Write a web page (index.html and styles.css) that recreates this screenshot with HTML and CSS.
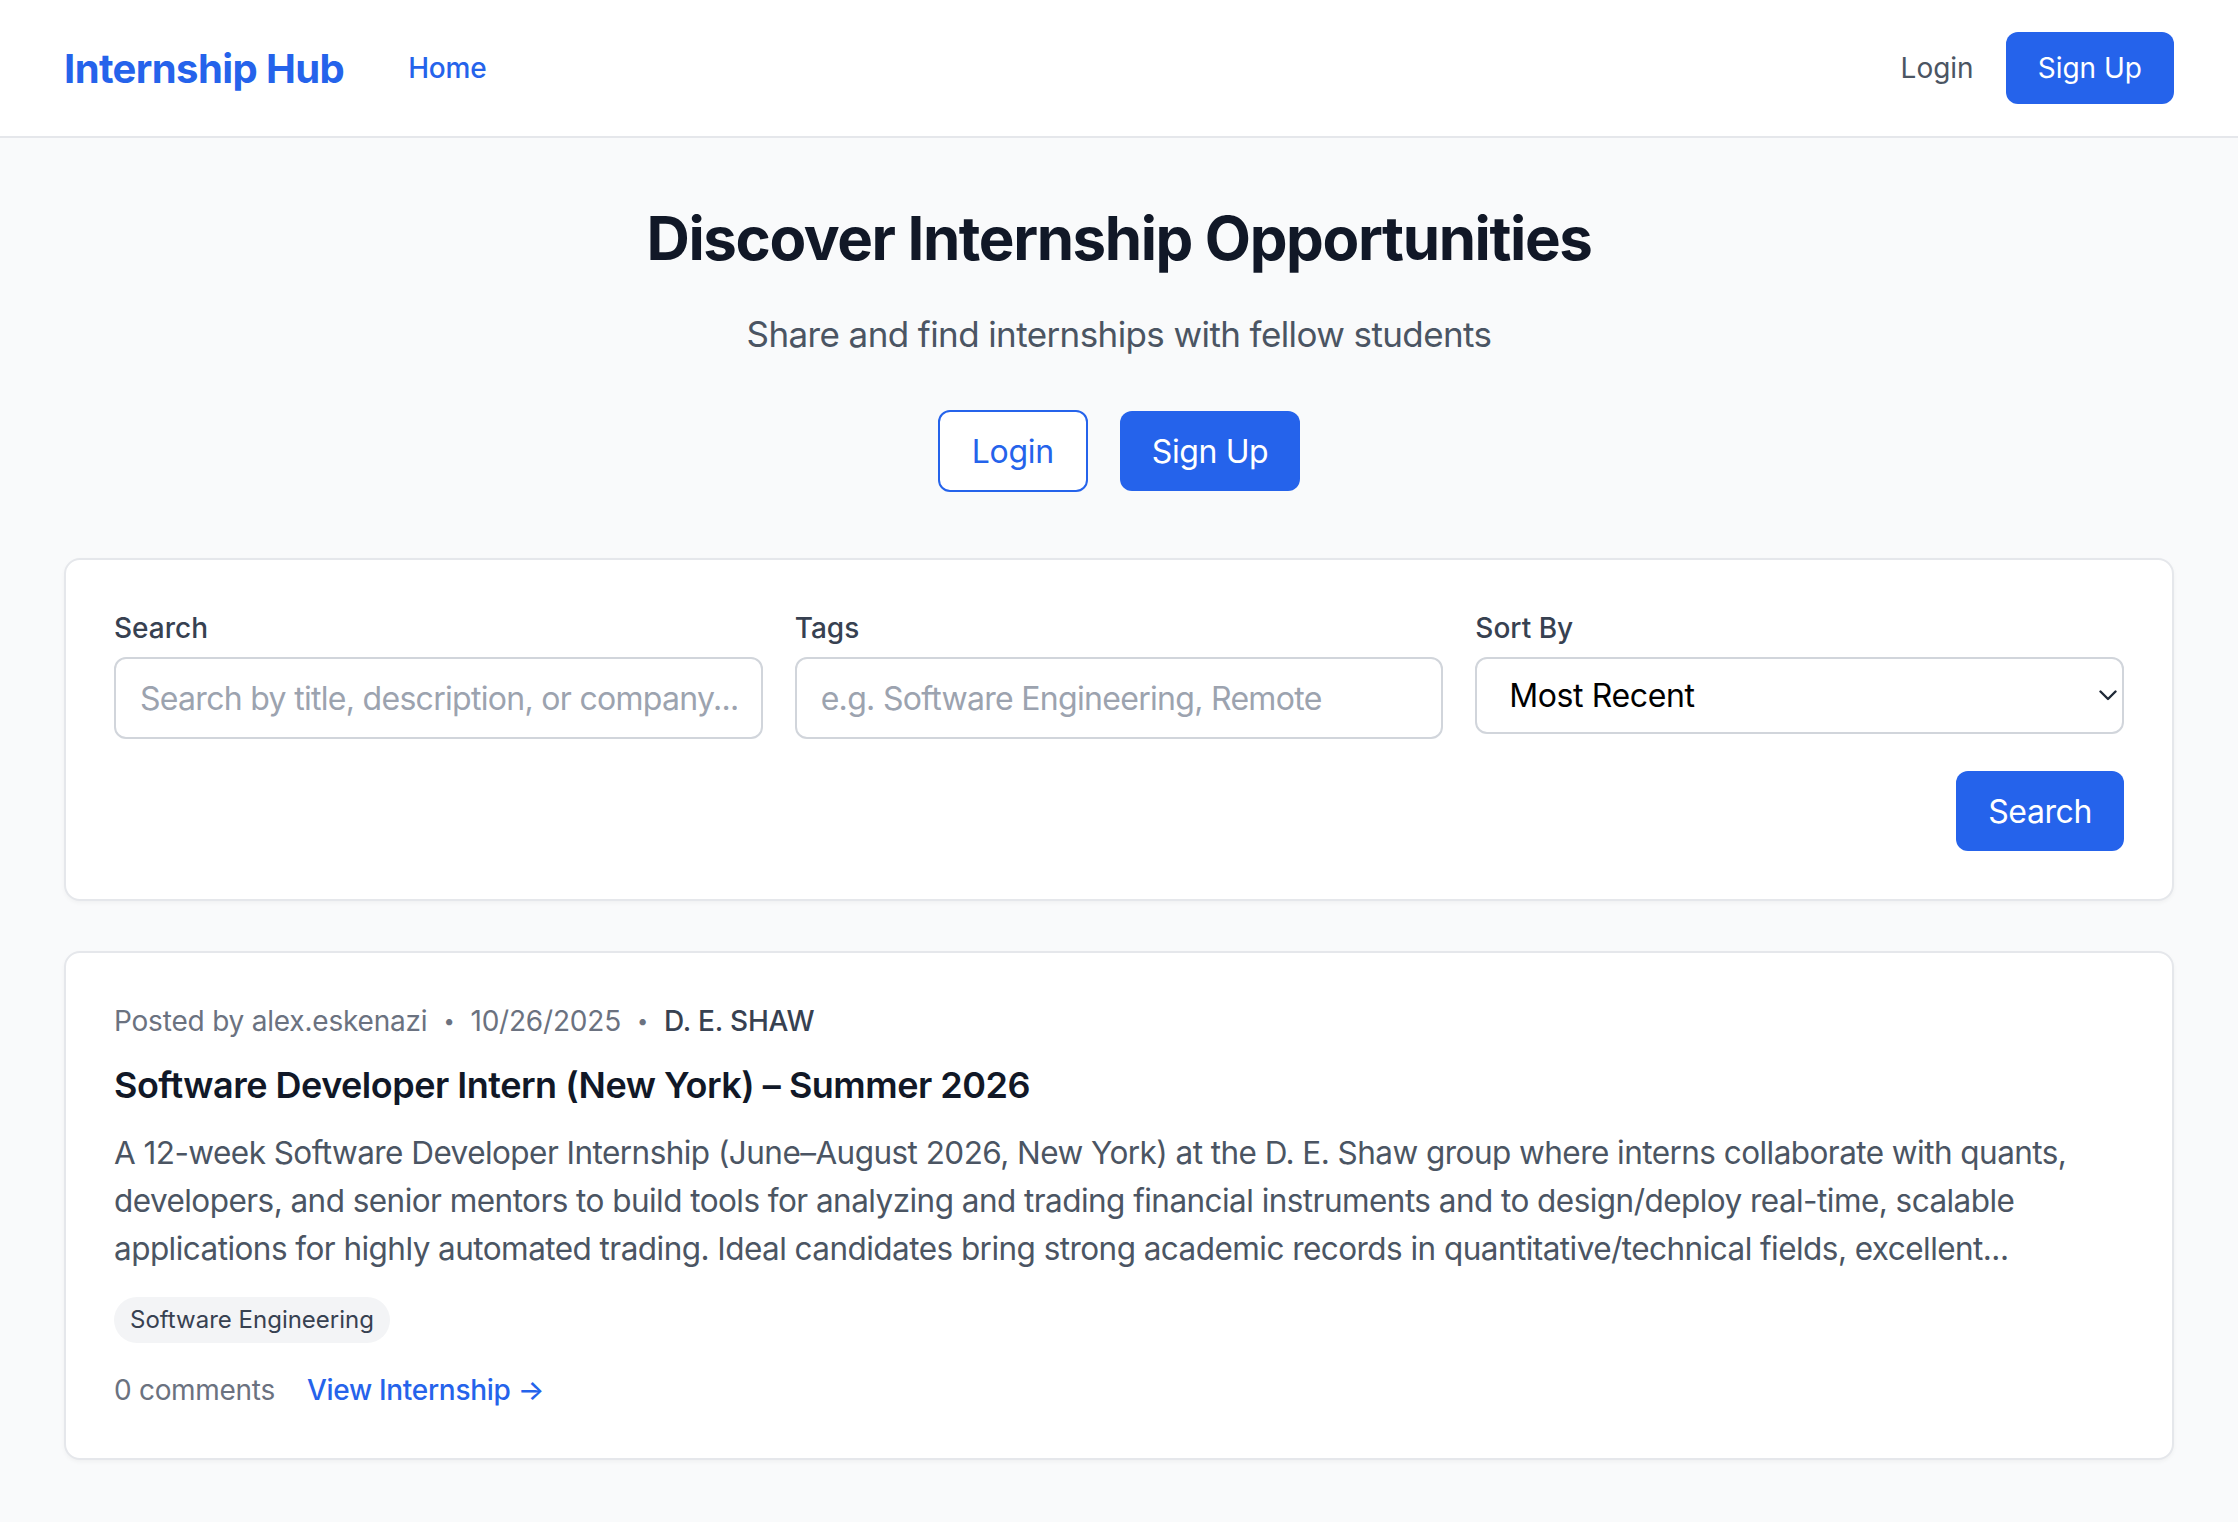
FILE: index.html
```html
<!DOCTYPE html>
<html lang="en">
<head>
<meta charset="utf-8">
<title>Internship Hub</title>
<link rel="stylesheet" href="styles.css">
</head>
<body>
<nav class="navbar">
  <div class="nav-left">
    <a class="brand" href="#">Internship Hub</a>
    <a class="nav-link" href="#">Home</a>
  </div>
  <div class="nav-right">
    <a class="nav-login" href="#">Login</a>
    <a class="btn btn-primary btn-nav" href="#">Sign Up</a>
  </div>
</nav>

<main class="container">
  <section class="hero">
    <h1 class="hero-title">Discover Internship Opportunities</h1>
    <p class="hero-sub">Share and find internships with fellow students</p>
    <div class="hero-actions">
      <a class="btn btn-outline" href="#">Login</a>
      <a class="btn btn-primary btn-lg" href="#">Sign Up</a>
    </div>
  </section>

  <section class="card search-card">
    <div class="filters">
      <div class="field">
        <label class="field-label">Search</label>
        <input class="input" type="text" placeholder="Search by title, description, or company...">
      </div>
      <div class="field">
        <label class="field-label">Tags</label>
        <input class="input" type="text" placeholder="e.g. Software Engineering, Remote">
      </div>
      <div class="field">
        <label class="field-label">Sort By</label>
        <div class="select-wrap">
          <select class="select">
            <option>Most Recent</option>
          </select>
          <svg class="chevron" width="18" height="11" viewBox="0 0 18 11"><path d="M1.5 1.5 L9 9 L16.5 1.5" fill="none" stroke="#1f2937" stroke-width="2.4" stroke-linecap="round" stroke-linejoin="round"/></svg>
        </div>
      </div>
    </div>
    <div class="search-actions">
      <button class="btn btn-primary btn-lg" type="button">Search</button>
    </div>
  </section>

  <article class="card listing">
    <div class="meta">
      <span class="meta-muted">Posted by alex.eskenazi</span>
      <span class="meta-dot">•</span>
      <span class="meta-muted">10/26/2025</span>
      <span class="meta-dot">•</span>
      <span class="meta-company">D. E. SHAW</span>
    </div>
    <h2 class="listing-title">Software Developer Intern (New York) – Summer 2026</h2>
    <p class="listing-desc">A 12-week Software Developer Internship (June–August 2026, New York) at the D. E. Shaw group where interns collaborate with quants, developers, and senior mentors to build tools for analyzing and trading financial instruments and to design/deploy real-time, scalable applications for highly automated trading. Ideal candidates bring strong academic records in quantitative/technical fields, excellent...</p>
    <div class="tags">
      <span class="tag">Software Engineering</span>
    </div>
    <div class="listing-footer">
      <span class="comments">0 comments</span>
      <a class="view-link" href="#">View Internship →</a>
    </div>
  </article>
</main>
</body>
</html>
```

FILE: styles.css
```css
* { box-sizing: border-box; }

html, body {
  margin: 0;
  padding: 0;
}

body {
  background: #f9fafb;
  font-family: Inter, "Liberation Sans", sans-serif;
  color: #111827;
  min-height: 1522px;
}

a { text-decoration: none; }

.navbar {
  display: flex;
  align-items: center;
  justify-content: space-between;
  height: 138px;
  padding: 0 64px;
  background: #ffffff;
  border-bottom: 2px solid #e5e7eb;
}

.nav-left {
  display: flex;
  align-items: center;
  gap: 64px;
}

.brand {
  font-size: 40px;
  font-weight: 700;
  color: #2563eb;
  letter-spacing: -0.6px;
}

.nav-link {
  font-size: 28px;
  color: #2563eb;
  font-weight: 500;
  letter-spacing: -0.2px;
}

.nav-right {
  display: flex;
  align-items: center;
  gap: 32px;
}

.nav-login {
  font-size: 28px;
  color: #4b5563;
}

.btn {
  display: inline-flex;
  align-items: center;
  justify-content: center;
  border-radius: 12px;
  font-family: inherit;
  cursor: pointer;
  border: none;
}

.btn-primary {
  background: #2563eb;
  color: #ffffff;
}

.btn-nav {
  height: 72px;
  padding: 0 32px;
  font-size: 28px;
}

.btn-lg {
  height: 80px;
  padding: 0 32px;
  font-size: 32px;
  letter-spacing: -0.4px;
}

.btn-outline {
  height: 82px;
  padding: 0 32px;
  font-size: 32px;
  color: #2563eb;
  border: 2px solid #2563eb;
  background: #ffffff;
  letter-spacing: -0.3px;
}

.container {
  padding: 64px 64px 64px;
}

.hero {
  display: flex;
  flex-direction: column;
  align-items: center;
  margin-bottom: 66px;
}

.hero-title {
  margin: 0;
  font-size: 60px;
  line-height: 72px;
  font-weight: 700;
  color: #111827;
  letter-spacing: -1.4px;
}

.hero-sub {
  margin: 32px 0 48px;
  font-size: 35px;
  line-height: 56px;
  color: #4b5563;
  letter-spacing: -0.6px;
}

.hero-actions {
  display: flex;
  align-items: center;
  gap: 32px;
}

.card {
  background: #ffffff;
  border: 2px solid #e5e7eb;
  border-radius: 16px;
  box-shadow: 0 2px 4px rgba(0, 0, 0, 0.04);
  padding: 48px;
}

.search-card {
  margin-bottom: 50px;
}

.filters {
  display: grid;
  grid-template-columns: 1fr 1fr 1fr;
  gap: 32px;
}

.field {
  display: flex;
  flex-direction: column;
}

.field-label {
  font-size: 28px;
  line-height: 40px;
  font-weight: 500;
  color: #374151;
  margin-bottom: 9px;
}

.input {
  height: 82px;
  border: 2px solid #d1d5db;
  border-radius: 12px;
  padding: 0 24px;
  font-family: inherit;
  font-size: 32px;
  letter-spacing: -0.7px;
  color: #111827;
  background: #ffffff;
  outline: none;
}

.input::placeholder {
  color: #9ca3af;
}

.select-wrap {
  position: relative;
}

.select {
  width: 100%;
  height: 77px;
  border: 2px solid #d1d5db;
  border-radius: 12px;
  padding: 0 32px;
  font-family: inherit;
  font-size: 32px;
  letter-spacing: -0.4px;
  color: #000000;
  background: #ffffff;
  -webkit-appearance: none;
  appearance: none;
  outline: none;
}

.chevron {
  position: absolute;
  right: 7px;
  top: 33px;
  pointer-events: none;
}

.search-actions {
  display: flex;
  justify-content: flex-end;
  margin-top: 32px;
}

.meta {
  display: flex;
  align-items: center;
  font-size: 28px;
  line-height: 40px;
  margin-bottom: 16px;
  letter-spacing: -0.2px;
}

.meta-muted {
  color: #6b7280;
}

.meta-dot {
  color: #6b7280;
  font-size: 20px;
  margin: 0 16px;
}

.meta-company {
  color: #374151;
  font-weight: 500;
}

.listing-title {
  margin: 0 0 16px;
  font-size: 36px;
  line-height: 56px;
  font-weight: 600;
  color: #111827;
  letter-spacing: -0.5px;
}

.listing-desc {
  margin: 0 0 24px;
  font-size: 31.5px;
  line-height: 48px;
  color: #4b5563;
  letter-spacing: -0.55px;
}

.tags {
  display: flex;
  gap: 16px;
}

.tag {
  display: inline-block;
  background: #f3f4f6;
  color: #374151;
  font-size: 24px;
  line-height: 32px;
  padding: 7px 16px;
  border-radius: 999px;
}

.listing-footer {
  display: flex;
  align-items: center;
  gap: 32px;
  margin-top: 27px;
  font-size: 28px;
  line-height: 40px;
  letter-spacing: -0.3px;
}

.comments {
  color: #6b7280;
}

.view-link {
  color: #2563eb;
  font-weight: 500;
}
```
